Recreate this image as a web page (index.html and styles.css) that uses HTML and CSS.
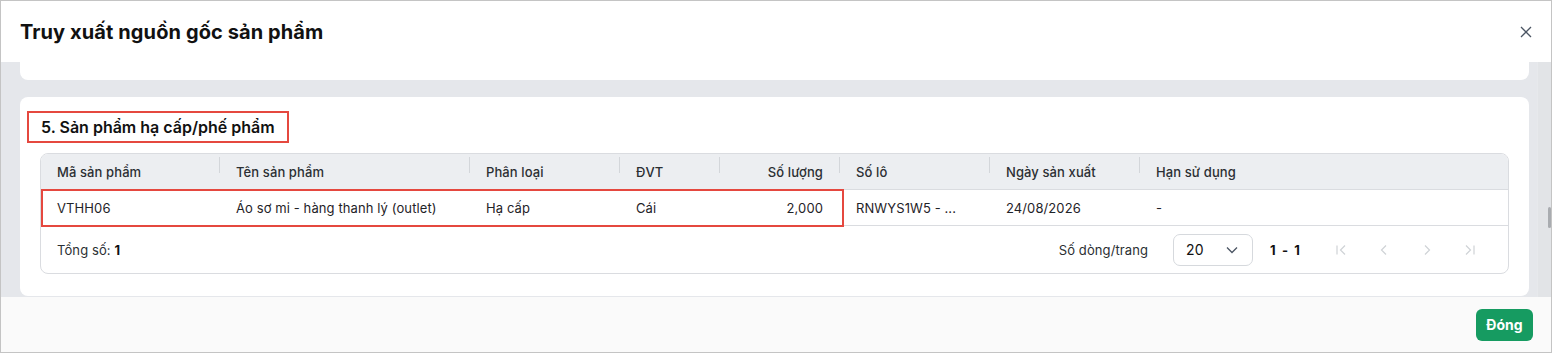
FILE: index.html
```html
<!DOCTYPE html>
<html lang="vi">
<head>
<meta charset="utf-8">
<link rel="stylesheet" href="styles.css">
</head>
<body>
<div class="modal">
  <header class="modal-head">
    <h1 class="modal-title">Truy xuất nguồn gốc sản phẩm</h1>
    <button class="close-btn" aria-label="Đóng">
      <svg width="12" height="12" viewBox="0 0 12 12"><path d="M1 1L11 11M11 1L1 11" stroke="#4b5563" stroke-width="1.3" fill="none"/></svg>
    </button>
  </header>
  <div class="modal-body">
    <div class="scroll-content">
      <div class="card card-prev"></div>
      <section class="card card-main">
        <h2 class="section-title">5. Sản phẩm hạ cấp/phế phẩm</h2>
        <div class="table">
          <div class="row head-row">
            <div class="cell c1">Mã sản phẩm</div>
            <div class="cell c2">Tên sản phẩm</div>
            <div class="cell c3">Phân loại</div>
            <div class="cell c4">ĐVT</div>
            <div class="cell c5 num">Số lượng</div>
            <div class="cell c6">Số lô</div>
            <div class="cell c7">Ngày sản xuất</div>
            <div class="cell c8">Hạn sử dụng</div>
          </div>
          <div class="row data-row">
            <div class="cell c1">VTHH06</div>
            <div class="cell c2">Áo sơ mi - hàng thanh lý (outlet)</div>
            <div class="cell c3">Hạ cấp</div>
            <div class="cell c4">Cái</div>
            <div class="cell c5 num">2,000</div>
            <div class="cell c6">RNWYS1W5 - ...</div>
            <div class="cell c7">24/08/2026</div>
            <div class="cell c8">-</div>
          </div>
          <div class="row-highlight"></div>
          <div class="table-foot">
            <div class="total">Tổng số: <b>1</b></div>
            <div class="pager">
              <span class="pager-label">Số dòng/trang</span>
              <div class="page-size">
                <span>20</span>
                <svg width="12" height="8" viewBox="0 0 12 8"><path d="M1 1.5L6 6.5L11 1.5" stroke="#4b5563" stroke-width="1.3" fill="none"/></svg>
              </div>
              <span class="range">1 - 1</span>
              <div class="nav">
                <svg width="14" height="14" viewBox="0 0 14 14"><path d="M3 2.5V11.5M11 2.5L6.5 7L11 11.5" stroke="#cfd2d6" stroke-width="1.2" fill="none"/></svg>
                <svg width="14" height="14" viewBox="0 0 14 14"><path d="M9 2.5L4.5 7L9 11.5" stroke="#cfd2d6" stroke-width="1.2" fill="none"/></svg>
                <svg width="14" height="14" viewBox="0 0 14 14"><path d="M5 2.5L9.5 7L5 11.5" stroke="#cfd2d6" stroke-width="1.2" fill="none"/></svg>
                <svg width="14" height="14" viewBox="0 0 14 14"><path d="M3 2.5L7.5 7L3 11.5M11 2.5V11.5" stroke="#cfd2d6" stroke-width="1.2" fill="none"/></svg>
              </div>
            </div>
          </div>
        </div>
      </section>
    </div>
    <div class="scrollbar"><div class="thumb"></div></div>
  </div>
  <footer class="modal-foot">
    <button class="btn-close">Đóng</button>
  </footer>
</div>
</body>
</html>
```

FILE: styles.css
```css
* { box-sizing: border-box; }
html, body { margin: 0; padding: 0; }
body {
  width: 1552px;
  height: 353px;
  font-family: Inter, "Noto Sans", "Liberation Sans", sans-serif;
  color: #1f2328;
  background: #fff;
  overflow: hidden;
}
.modal {
  width: 1552px;
  height: 353px;
  border: 1px solid #c4c4c4;
  display: flex;
  flex-direction: column;
  background: #fff;
}
.modal-head {
  height: 61px;
  flex: none;
  display: flex;
  align-items: center;
  justify-content: space-between;
  padding: 0 18px 0 19px;
}
.modal-title {
  margin: 0;
  font-size: 20px;
  font-weight: 700;
  color: #111;
  letter-spacing: 0.1px;
}
.close-btn {
  border: 0;
  background: none;
  padding: 0;
  width: 14px;
  height: 14px;
  display: flex;
  align-items: center;
  justify-content: center;
}
.modal-body {
  flex: none;
  height: 235px;
  background: #e5e7eb;
  display: flex;
}
.scroll-content {
  flex: 1;
  padding: 0 8px 0 19px;
  display: flex;
  flex-direction: column;
  gap: 17px;
}
.card {
  background: #fff;
  border-radius: 8px;
}
.card-prev {
  height: 18px;
  border-radius: 0 0 8px 8px;
}
.card-main {
  height: 199px;
  padding: 14px 20px 0 20px;
}
.section-title {
  margin: 0 0 10px -13px;
  width: fit-content;
  border: 2px solid #e5483f;
  padding: 0 12px;
  height: 32px;
  line-height: 28px;
  font-size: 16px;
  font-weight: 600;
  color: #111;
}
.table {
  position: relative;
  border: 1px solid #dadce0;
  border-radius: 8px;
  overflow: hidden;
  font-size: 13px;
  letter-spacing: 0.1px;
}
.row {
  display: flex;
  align-items: center;
}
.head-row {
  height: 36px;
  background: #eceef1;
  border-bottom: 1px solid #dadce0;
  font-weight: 500;
  color: #2b2f33;
}
.data-row {
  height: 36px;
  border-bottom: 1px solid #dadce0;
  color: #1f2328;
}
.cell {
  padding: 0 16px;
  white-space: nowrap;
  position: relative;
}
.head-row .cell:not(.c8)::after {
  content: "";
  position: absolute;
  right: 0;
  top: -7px;
  height: 16px;
  border-right: 1px solid #d3d6da;
}
.c1 { width: 179px; }
.c2 { width: 250px; }
.c3 { width: 150px; }
.c4 { width: 100px; }
.c5 { width: 120px; text-align: right; padding-right: 17px; }
.c6 { width: 150px; }
.c7 { width: 150px; }
.c8 { flex: 1; }
.row-highlight {
  position: absolute;
  left: 0;
  top: 35px;
  width: 803px;
  height: 38px;
  border: 2px solid #e5483f;
  pointer-events: none;
}
.table-foot {
  height: 47px;
  display: flex;
  align-items: center;
  justify-content: space-between;
  padding: 0 0 0 16px;
  color: #2b2f33;
}
.total b { font-weight: 700; color: #111; }
.pager {
  display: flex;
  align-items: center;
}
.pager-label { margin-right: 25px; }
.page-size {
  width: 80px;
  height: 32px;
  border: 1px solid #d6d9dd;
  border-radius: 7px;
  display: flex;
  align-items: center;
  justify-content: space-between;
  padding: 0 14px 0 12px;
  font-size: 14px;
  color: #111;
}
.range {
  margin-left: 17px;
  font-weight: 700;
  color: #111;
  word-spacing: 3px;
}
.nav {
  display: flex;
  align-items: center;
  gap: 29px;
  margin-left: 34px;
  margin-right: 31px;
}
.scrollbar {
  width: 14px;
  flex: none;
  background: #e2e4e7;
  position: relative;
  border-left: 1px solid #e7e9ec;
}
.thumb {
  position: absolute;
  right: 0;
  top: 145px;
  width: 3px;
  height: 21px;
  background: #a9acb0;
  border-radius: 2px;
}
.modal-foot {
  flex: 1;
  background: #fafafa;
  display: flex;
  align-items: center;
  justify-content: flex-end;
  padding: 0 18px 0 0;
}
.btn-close {
  width: 57px;
  height: 32px;
  border: 0;
  border-radius: 6px;
  background: #169b61;
  color: #fff;
  font-family: Inter, "Noto Sans", sans-serif;
  font-size: 14px;
  font-weight: 700;
}
```
